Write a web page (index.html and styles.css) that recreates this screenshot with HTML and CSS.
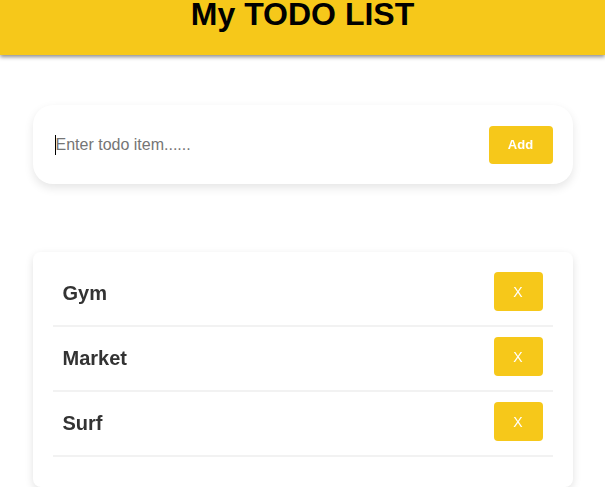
FILE: index.html
```html
<!DOCTYPE html>
<html>
<head>
<meta charset="utf-8">
<link rel="stylesheet" href="styles.css">
</head>
<body>
<header class="header">
  <h1 class="title">My TODO LIST</h1>
</header>
<main class="main">
  <form class="entry">
    <input class="entry-input" type="text" placeholder="Enter todo item......" autofocus>
    <button class="btn btn-add" type="button">Add</button>
  </form>
  <ul class="list">
    <li class="item"><span class="item-text">Gym</span><button class="btn btn-del" type="button">X</button></li>
    <li class="item"><span class="item-text">Market</span><button class="btn btn-del" type="button">X</button></li>
    <li class="item"><span class="item-text">Surf</span><button class="btn btn-del" type="button">X</button></li>
  </ul>
</main>
</body>
</html>
```

FILE: styles.css
```css
* { box-sizing: border-box; }
html, body { margin: 0; padding: 0; background: #fff; }
body { font-family: "Liberation Sans", Arial, sans-serif; color: #333; overflow: hidden; }

.header {
  height: 55px;
  background: #f6c81a;
  box-shadow: 0 2px 4px rgba(0, 0, 0, 0.45);
  overflow: hidden;
  text-align: center;
}
.title {
  margin: -4px 0 0;
  font-size: 32px;
  line-height: 36px;
  font-weight: bold;
  color: #000;
}

.main {
  width: 540px;
  margin: 0 auto;
  padding-top: 50px;
  display: flex;
  flex-direction: column;
  gap: 68px;
}

.entry {
  margin: 0;
  display: flex;
  align-items: center;
  padding: 20px;
  height: 79px;
  background: #fff;
  border-radius: 20px;
  box-shadow: 0 4px 10px rgba(0, 0, 0, 0.1);
}
.entry-input {
  flex: 1;
  border: none;
  outline: none;
  padding: 1px 3px;
  border-left: 1px solid #000;
  font-family: "Liberation Sans", Arial, sans-serif;
  font-size: 16px;
  color: #333;
  background: transparent;
  margin-left: 2px;
  padding-left: 0;
}
.entry-input::placeholder { color: #757575; }

.btn {
  border: none;
  border-radius: 4px;
  background: #f6c81a;
  color: #fff;
  font-family: "Liberation Sans", Arial, sans-serif;
  font-size: 13px;
  padding: 0;
  cursor: pointer;
}
.btn-add { width: 64px; height: 38px; font-weight: bold; }
.btn-del { width: 49px; height: 39px; font-size: 14px; }

.list {
  list-style: none;
  margin: 0;
  padding: 10px 20px 30px;
  background: #fff;
  border-radius: 8px;
  box-shadow: 0 3px 8px rgba(0, 0, 0, 0.12);
}
.item {
  display: flex;
  align-items: center;
  justify-content: space-between;
  padding: 10px 10px 14px;
  border-bottom: 2px solid #f2f2f2;
}
.item-text {
  margin-top: 4px;
  font-size: 20px;
  font-weight: bold;
  color: #333;
}
```
